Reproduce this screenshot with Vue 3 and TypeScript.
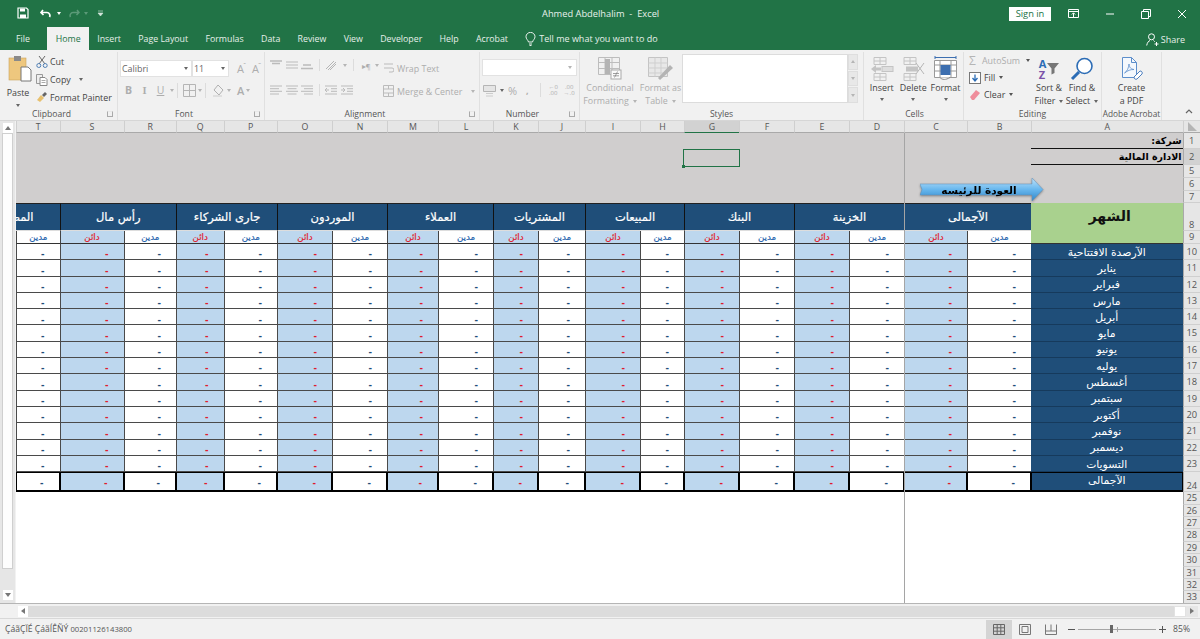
<script setup lang="ts">
const tabs = ['Insert', 'Page Layout', 'Formulas', 'Data', 'Review', 'View', 'Developer', 'Help', 'Acrobat']
const letters = ['A', 'B', 'C', 'D', 'E', 'F', 'G', 'H', 'I', 'J', 'K', 'L', 'M', 'N', 'O', 'P', 'Q', 'R', 'S', 'T']
const heads = ['الآجمالى', 'الخزينة', 'البنك', 'المبيعات', 'المشتريات', 'العملاء', 'الموردون', 'جارى الشركاء', 'رأس مال']
const months: [number, string][] = [
  [10, 'الآرصدة الافتتاحية'], [11, 'يناير'], [12, 'فبراير'], [13, 'مارس'], [14, 'أبريل'], [15, 'مايو'], [16, 'يونيو'],
  [17, 'يوليه'], [18, 'أغسطس'], [19, 'سبتمبر'], [20, 'أكتوبر'], [21, 'نوفمبر'], [22, 'ديسمبر'], [23, 'التسويات'],
]
const dataCols = Array.from({ length: 19 }, (_, i) => i)
const blankRows = [25, 26, 27, 28, 29, 30, 31, 32, 33]
</script>

<template>
  <div class="app">
    <header class="title">
      <div class="qat">
        <svg width="12" height="12" viewBox="0 0 12 12" class="save"><path d="M1 1h8.500L11 2.500V11H1z" fill="none" stroke="#fff" stroke-width="1.200"/><path d="M3 1.500h5v3H3zM3 7.500h6V11H3z" fill="#fff"/></svg>
        <svg width="12" height="10" viewBox="0 0 12 10" class="undo"><path d="M3 1 1 3.500 3.500 6M1.500 3.500H7a3 3 0 0 1 2.500 4.500" fill="none" stroke="#fff" stroke-width="1.700"/></svg>
        <i class="caret white c1"></i>
        <svg width="12" height="10" viewBox="0 0 12 10" class="redo"><path d="M9 1l2 2.500L8.500 6M10.500 3.500H5A3 3 0 0 0 2.500 8" fill="none" stroke="#5b9a78" stroke-width="1.500"/></svg>
        <i class="caret dim c2"></i>
        <svg width="7" height="7" viewBox="0 0 7 7" class="cust"><path d="M1 1h5M1 3h5L3.500 6z" fill="#d5e6dc" stroke="#d5e6dc" stroke-width=".6"/></svg>
      </div>
      <div class="doc">Ahmed Abdelhalim&nbsp; -&nbsp; Excel</div>
      <div class="win">
        <span class="signin">Sign in</span>
        <svg class="w1" width="11" height="10" viewBox="0 0 11 10"><path d="M.5.500h10v8H.5zM.5 2.500h10M5.500 8V4M3.800 5.500 5.500 3.800 7.200 5.500" fill="none" stroke="#fff"/></svg>
        <svg class="w2" width="10" height="10" viewBox="0 0 10 10"><path d="M1 5h8" stroke="#fff"/></svg>
        <svg class="w3" width="10" height="10" viewBox="0 0 10 10"><path d="M.5 2.500h7v7h-7zM2.500 2.500v-2h7v7h-2" fill="none" stroke="#fff"/></svg>
        <svg class="w4" width="10" height="10" viewBox="0 0 10 10"><path d="M1 1l8 8M9 1l-8 8" stroke="#fff"/></svg>
      </div>
    </header>

    <nav class="tabs">
      <span class="tab file">File</span>
      <span class="tab home">Home</span>
      <span v-for="t in tabs" :key="t" class="tab">{{ t }}</span>
      <span class="tell">
        <svg width="11" height="14" viewBox="0 0 11 14"><path d="M3.500 10C3 8 1 7 1 4.700a4.500 4.300 0 0 1 9 0C10 7 8 8 7.500 10zM4 12h3M4.500 13.500h2" fill="none" stroke="#fff" stroke-width=".9"/></svg>
        Tell me what you want to do
      </span>
      <span class="share">
        <svg width="13" height="13" viewBox="0 0 13 13"><circle cx="5.500" cy="3.800" r="3" fill="none" stroke="#fff"/><path d="M.7 12.500c.5-3 2-4.500 3.300-5M7.500 7.500c.5.300 1 .8 1.200 1.200M8.500 11h4M10.500 9v4" fill="none" stroke="#fff"/></svg>
        Share
      </span>
    </nav>

    <section class="ribbon">
      <div class="group g-clip">
        <div class="body row">
          <div class="paste">
            <svg width="24" height="29" viewBox="0 0 24 29"><rect x="1" y="3" width="17" height="22" fill="#eec77e" stroke="#c9a35c" stroke-width=".6"/><rect x="6" y="1" width="7" height="5" fill="#8a8a8a"/><path d="M13 12h7l3 3v11H13z" fill="#fff" stroke="#777"/></svg>
            <span class="lbl p-txt">Paste</span>
            <i class="caret"></i>
          </div>
          <div class="stack">
            <div class="srow">
              <svg width="12" height="13" viewBox="0 0 12 13"><path d="M3 1l6 8M9 1 3 9" stroke="#666" fill="none"/><circle cx="2.800" cy="10.500" r="2" fill="none" stroke="#4f7fb5"/><circle cx="9.200" cy="10.500" r="2" fill="none" stroke="#4f7fb5"/></svg>
              Cut
            </div>
            <div class="srow">
              <svg width="12" height="13" viewBox="0 0 12 13"><path d="M.5 1.500h6v9h-6z" fill="#eee" stroke="#999"/><path d="M4 4.500h5l2 2v6H4z" fill="#fff" stroke="#888"/><path d="M5.500 7.500h4M5.500 9.500h4" stroke="#aaa"/></svg>
              Copy <i class="caret ml6"></i>
            </div>
            <div class="srow">
              <svg width="12" height="12" viewBox="0 0 12 12"><path d="M1 9l4-5 3 3-4 4z" fill="#e7c06e"/><path d="M6 4l3-3 2 2-3 3z" fill="#666"/></svg>
              Format Painter
            </div>
          </div>
        </div>
        <div class="gl pr">Clipboard<i class="launch"></i></div>
      </div>

      <div class="group g-font">
        <div class="body col">
          <div class="combos">
            <span class="combo c-name">Calibri<i class="caret"></i></span>
            <span class="combo c-size">11<i class="caret"></i></span>
            <span class="ga g1">A<sup>ˆ</sup></span>
            <span class="ga g2">A<sup>ˇ</sup></span>
          </div>
          <div class="fonts2">
            <b class="dis bi">B</b><i class="dis bi serif">I</i><u class="dis bi">U</u><i class="caret dis2 f-c1"></i>
            <span class="sep f-s"></span>
            <svg class="f-i" width="13" height="13" viewBox="0 0 13 13"><path d="M.5.500h12v12H.5zM6.500.500v12M.5 6.500h12" fill="none" stroke="#b5b5b5"/></svg><i class="caret dis2 f-c2"></i>
            <span class="sep f-s"></span>
            <svg class="f-i2" width="13" height="13" viewBox="0 0 13 13"><path d="M6 1l5 5-4 5-5-5z" fill="none" stroke="#b0b0b0"/><path d="M1 12h9" stroke="#d8d8d8" stroke-width="1.500"/></svg><i class="caret dis2 f-c2"></i>
            <span class="dis ca">A</span><i class="caret dis2 f-c2"></i>
          </div>
        </div>
        <div class="gl pr">Font<i class="launch"></i></div>
      </div>

      <div class="group g-align">
        <div class="body al">
          <div class="al-rows">
            <div class="alr">
              <svg width="12" height="10" viewBox="0 0 12 10"><path d="M0 1h12M2 3.500h8" stroke="#bbb" stroke-width="1.300"/></svg>
              <svg width="12" height="10" viewBox="0 0 12 10"><path d="M0 2h12M0 5h12M0 8h12" stroke="#bbb"/></svg>
              <svg width="12" height="10" viewBox="0 0 12 10"><path d="M2 5h8M0 8.500h12" stroke="#bbb" stroke-width="1.300"/></svg>
              <span class="sep s2"></span>
              <svg class="orient" width="13" height="12" viewBox="0 0 13 12"><path d="M1 10 9 2M3 11l8-8M5 11l6-6" stroke="#b5b5b5"/></svg>
              <i class="caret dis2 a-c"></i>
              <span class="sep s2 a-s"></span>
              <span class="dis para">▸¶</span>
              <i class="caret dis2 a-c"></i>
            </div>
            <div class="alr">
              <svg width="12" height="10" viewBox="0 0 12 10"><path d="M0 1h12M0 3.700h9M0 6.300h12M0 9h9" stroke="#bbb"/></svg>
              <svg width="12" height="10" viewBox="0 0 12 10"><path d="M0 1h12M1.500 3.700h9M0 6.300h12M1.500 9h9" stroke="#bbb"/></svg>
              <svg width="12" height="10" viewBox="0 0 12 10"><path d="M0 1h12M3 3.700h9M0 6.300h12M3 9h9" stroke="#bbb"/></svg>
              <span class="sep s2"></span>
              <svg class="orient" width="12" height="10" viewBox="0 0 12 10"><path d="M0 1h12M6 3.700h6M6 6.300h6M0 9h12M4 5H0l2-2M0 5l2 2" fill="none" stroke="#bbb"/></svg>
              <svg class="ind2" width="12" height="10" viewBox="0 0 12 10"><path d="M0 1h12M6 3.700h6M6 6.300h6M0 9h12M0 5h4l-2-2M4 5 2 7" fill="none" stroke="#bbb"/></svg>
            </div>
          </div>
          <span class="sep s3"></span>
          <div class="al-right">
            <div class="dis2-row"><svg width="11" height="12" viewBox="0 0 11 12"><path d="M1 2h9M1 6h8a2 2 0 0 1 0 4H6" fill="none" stroke="#bbb"/></svg><span class="dis-t">Wrap Text</span></div>
            <div class="dis2-row"><svg width="11" height="12" viewBox="0 0 11 12"><path d="M.5.500h10v11H.5zM.5 4h10M.5 8h10M5.500.500V4M5.500 8v3.500" fill="none" stroke="#bbb"/></svg><span class="dis-t">Merge &amp; Center</span><i class="caret dis2 m4"></i></div>
          </div>
        </div>
        <div class="gl pr">Alignment<i class="launch"></i></div>
      </div>

      <div class="group g-num">
        <div class="body col">
          <div class="n-combo"><i class="caret dis2"></i></div>
          <div class="n-row">
            <svg width="13" height="13" viewBox="0 0 13 13"><path d="M.5 1.500h12v6H.5z" fill="#e5e5e5" stroke="#b5b5b5"/><path d="M3 9.500h7M3 12h7" stroke="#ccc"/></svg>
            <i class="caret"></i>
            <span class="dis pct">%</span>
            <span class="dis comma">,</span>
            <span class="sep s4"></span>
            <span class="dis dec">←0<br>.00</span>
            <span class="dis dec d2">.00<br>→.0</span>
          </div>
        </div>
        <div class="gl pr">Number<i class="launch"></i></div>
      </div>

      <div class="group g-sty">
        <div class="body row">
          <div class="big w60">
            <div class="ico">
              <svg width="24" height="23" viewBox="0 0 24 23"><path d="M.5.500h21v17H.5zM.5 5.500h21M.5 11.500h21M7 .500v17M14 .500v17" fill="none" stroke="#bdbdbd"/><rect x="7" y="2" width="5" height="15" fill="#b4b4b4"/><rect x="13" y="13" width="10" height="9" fill="#fafafa" stroke="#aaa"/><path d="M15 16.500h6M15 18.800h6M19.500 14.500l-3 6" stroke="#888" fill="none" stroke-width=".8"/></svg>
            </div>
            <span class="dis-t">Conditional</span>
            <span class="dis-t">Formatting<i class="caret dis2 m3"></i></span>
          </div>
          <div class="big w42">
            <div class="ico">
              <svg width="26" height="24" viewBox="0 0 26 24"><path d="M.5.500h19v19H.5z" fill="#e8e8e8" stroke="#c4c4c4"/><path d="M.5 6h19M.5 11h19M.5 16h19M7 .500v19M13 .500v19" stroke="#cfcfcf"/><path d="M10 21 22 8l3 3-13 12z" fill="#b4b4b4"/></svg>
            </div>
            <span class="dis-t">Format as</span>
            <span class="dis-t">Table<i class="caret dis2 m3"></i></span>
          </div>
          <div class="gallery"></div>
          <div class="gscroll">
            <span><i class="caret up dis2"></i></span>
            <span><i class="caret dis2"></i></span>
            <span><i class="caret dis2"></i></span>
          </div>
        </div>
        <div class="gl">Styles</div>
      </div>

      <div class="group g-cells">
        <div class="body row">
          <div class="big w31">
            <div class="ico">
              <svg width="24" height="24" viewBox="0 0 24 24"><path d="M4 .500h12v7H4zM4 4h12M4 16.500h12v7H4zM4 20h12M10 .500v7M10 16.500v7" fill="none" stroke="#c4c4c4"/><path d="M1 12l5-4v2.500h5v3H6V16z" fill="#c4c4c4"/><rect x="12" y="9.500" width="11" height="5" fill="#dedede" stroke="#c4c4c4"/></svg>
            </div>
            <span class="t">Insert</span><i class="caret"></i>
          </div>
          <div class="big w31">
            <div class="ico">
              <svg width="24" height="24" viewBox="0 0 24 24"><path d="M3 .500h12v7H3zM3 4h12M3 16.500h12v7H3zM3 20h12M9 .500v7M9 16.500v7" fill="none" stroke="#c4c4c4"/><rect x="5" y="9.500" width="12" height="5" fill="#c4c4c4"/><path d="M15 6l8 11M23 6l-8 11" stroke="#b5b5b5"/></svg>
            </div>
            <span class="t">Delete</span><i class="caret"></i>
          </div>
          <div class="big w33">
            <div class="ico">
              <svg width="24" height="25" viewBox="0 0 24 25"><path d="M1 1.500h21M1 0v3M22 0v3" stroke="#3d6fb0" fill="none"/><path d="M.5 4.500h22v17H.5zM.5 9h22M.5 15h22M6 4.500v17M17 4.500v17" fill="#fff" stroke="#999"/><rect x="6.500" y="9" width="10" height="10" fill="#3d6fb0"/><path d="M6 21.500c2 2.500 6 2.500 10 0" fill="#fff" stroke="#888"/></svg>
            </div>
            <span class="t">Format</span><i class="caret"></i>
          </div>
        </div>
        <div class="gl">Cells</div>
      </div>

      <div class="group g-edit">
        <div class="body row">
          <div class="estack">
            <div class="erow dis-t"><span class="sum">Σ</span>AutoSum<i class="caret dark ml6"></i></div>
            <div class="erow"><svg width="12" height="12" viewBox="0 0 12 12"><rect x=".5" y=".5" width="11" height="11" fill="#fff" stroke="#777"/><path d="M6 2.500v6M3.500 6 6 9l2.500-3" fill="none" stroke="#2b6cb5" stroke-width="1.300"/></svg><span class="et">Fill</span><i class="caret dark m3"></i></div>
            <div class="erow"><svg width="12" height="12" viewBox="0 0 12 12"><path d="M1 8l6-7 4 3-6 7H3z" fill="#ef8d9b"/></svg><span class="et">Clear</span><i class="caret dark m3"></i></div>
          </div>
          <div class="big w33b">
            <div class="ico">
              <span class="azbox"><b class="a">A</b><b class="z">Z</b></span>
              <svg width="12" height="13" viewBox="0 0 12 13"><path d="M0 1h12L7.500 6.500V11L4.500 12.500V6.500z" fill="#777"/></svg>
            </div>
            <span class="t">Sort &amp;</span>
            <span class="t">Filter<i class="caret m3"></i></span>
          </div>
          <div class="big w34">
            <div class="ico">
              <svg width="24" height="24" viewBox="0 0 24 24"><circle cx="14.500" cy="9" r="7.500" fill="#fff" stroke="#2b6cb5" stroke-width="1.600"/><path d="M9 15 2 22" stroke="#2b6cb5" stroke-width="3"/></svg>
            </div>
            <span class="t">Find &amp;</span>
            <span class="t">Select<i class="caret m3"></i></span>
          </div>
        </div>
        <div class="gl">Editing</div>
      </div>

      <div class="group g-pdf">
        <div class="body row center">
          <div class="big wfull">
            <div class="ico">
              <svg width="22" height="24" viewBox="0 0 22 24"><path d="M1.500.500h9l5 5v15h-14z" fill="#f4f8fd" stroke="#5d8ecb"/><path d="M10.500.500v5h5" fill="none" stroke="#5d8ecb"/><path d="M3.500 16c3-2 4-5 4.500-9 .5 4 2 5 5 5.500-4 0-6 1-9.500 3.500z" fill="none" stroke="#5d8ecb" stroke-width=".8"/><path d="M14 19l5-5a2 2 0 0 1 2 3l-5 5a2 2 0 0 1-3-2z" fill="#fff" stroke="#4d7fbf"/></svg>
            </div>
            <span class="t">Create</span>
            <span class="t">a PDF</span>
          </div>
        </div>
        <div class="gl tight">Adobe Acrobat</div>
      </div>
      <div class="collapse"><svg width="8" height="6" viewBox="0 0 8 6"><path d="M1 5l3-3 3 3" fill="none" stroke="#666" stroke-width="1.200"/></svg></div>
    </section>

    <section class="main">
      <aside class="vscroll">
        <span class="vbtn"><i class="tri up"></i></span>
        <span class="vthumb"></span>
        <span class="vbtn low"><i class="tri"></i></span>
      </aside>
      <div class="sheet">
        <div class="grid">
          <div class="hd corner"><svg width="9" height="9" viewBox="0 0 9 9"><path d="M0 0v9h9z" fill="#b5b5b5"/></svg></div>
          <div v-for="l in letters" :key="l" class="hd" :class="{ active: l === 'G' }">{{ l }}</div>

          <div class="greyblock"></div>

          <div class="rn">1</div><div class="a-top lined">شركة:</div>
          <div class="rn act">2</div><div class="a-top lined">الادارة المالية</div>
          <div class="rn">5</div><div class="a-grey"></div>
          <div class="rn">6</div><div class="a-grey"></div>
          <div class="rn">7</div><div class="a-grey"></div>

          <div class="rn bottom">8</div>
          <div class="month-h">الشهر</div>
          <div v-for="h in heads" :key="h" class="merged">{{ h }}</div>
          <div class="merged last"><span>المصروفات</span></div>

          <div class="rn">9</div>
          <div class="month-sub"></div>
          <div v-for="c in dataCols" :key="'s' + c" class="sub" :class="c % 2 ? 'cr' : 'db'">{{ c % 2 ? 'دائن' : 'مدين' }}</div>

          <template v-for="m in months" :key="m[0]">
            <div class="rn">{{ m[0] }}</div>
            <div class="mon">{{ m[1] }}</div>
            <div v-for="c in dataCols" :key="c" class="cell" :class="c % 2 ? 'cr' : 'db'">-</div>
          </template>

          <div class="rn bottom">24</div>
          <div class="mon total">الآجمالى</div>
          <div v-for="c in dataCols" :key="'t' + c" class="cell tot" :class="c % 2 ? 'cr' : 'db'">-</div>

          <template v-for="r in blankRows" :key="r">
            <div class="rn">{{ r }}</div>
            <div class="blank"></div>
          </template>
        </div>
        <div class="freeze"></div>
        <div class="selected"><i></i></div>
        <div class="shape">
          <svg width="124" height="25" viewBox="0 0 124 25">
            <defs>
              <linearGradient id="ag" x1="0" y1="0" x2="0" y2="1">
                <stop offset="0" stop-color="#bfe3fa"/><stop offset=".5" stop-color="#68b7ee"/><stop offset="1" stop-color="#2f86c8"/>
              </linearGradient>
            </defs>
            <path d="M0 7h112V1l11 11.500L112 24v-6H0l2-5.500z" fill="url(#ag)" stroke="#5c8fb8" stroke-width=".5"/>
          </svg>
          <span>العودة للرئيسه</span>
        </div>
      </div>
    </section>

    <section class="hscroll">
      <span class="hbtn"><i class="tri left"></i></span>
      <span class="htrack"></span>
      <span class="hend"></span>
      <span class="hbtn2"><i class="tri right"></i></span>
    </section>

    <footer class="status">
      <span class="stxt">ÇáãÇÏÉ ÇáãÍÊÑÝ <span class="digits">00201126143800</span></span>
      <span class="view on"><svg width="12" height="11" viewBox="0 0 12 11"><path d="M.5.500h11v10H.5zM.5 3.800h11M.5 7.200h11M4.200.500v10M7.800.500v10" fill="none" stroke="#666"/></svg></span>
      <span class="view"><svg width="12" height="11" viewBox="0 0 12 11"><path d="M.5.500h11v10H.5z" fill="none" stroke="#777"/><path d="M3 2.500h6v6H3z" fill="none" stroke="#777"/></svg></span>
      <span class="view"><svg width="12" height="11" viewBox="0 0 12 11"><path d="M.5.500v10h11V.500M.5 7h11M6 .500V7" fill="none" stroke="#777"/></svg></span>
      <span class="zbar">
        <svg width="7" height="7" viewBox="0 0 7 7"><path d="M0 3.500h7" stroke="#555"/></svg>
        <span class="slider"><i class="knob"></i><i class="tick"></i></span>
        <svg width="7" height="7" viewBox="0 0 7 7"><path d="M0 3.500h7M3.500 0v7" stroke="#555"/></svg>
      </span>
      <span class="pct85">85%</span>
    </footer>
  </div>
</template>

<style scoped>
.app { width: 1200px; height: 639px; overflow: hidden; display: flex; flex-direction: column; font-family: "Open Sans", "Noto Sans", sans-serif; color: #444; background: #f1f1f1; }
i { font-style: normal; }
.title { height: 27px; background: #217346; display: flex; align-items: center; flex: none; }
.qat { display: flex; align-items: center; width: 120px; padding-left: 17px; box-sizing: border-box; }
.save { margin-top: -1px; }
.undo { margin-left: 11px; }
.c1 { margin-left: 5px; }
.redo { margin-left: 7px; }
.c2 { margin-left: 4px; }
.cust { margin-left: 9px; }
.doc { margin-left: 422px; color: #e8f1ec; font-size: 9.300px; white-space: nowrap; }
.win { margin-left: auto; display: flex; align-items: center; padding-right: 13px; }
.signin { width: 42px; height: 14px; line-height: 14px; background: #fff; color: #217346; text-align: center; font-size: 9.300px; margin-right: -1px; }
.w1 { margin-left: 18px; }
.w2 { margin-left: 26px; }
.w3 { margin-left: 26px; }
.w4 { margin-left: 26px; }

.tabs { height: 23px; background: #217346; display: flex; align-items: center; color: #e6f0ea; font-size: 8.800px; flex: none; padding-left: 16px; }
.tab { margin-right: 17.300px; white-space: nowrap; }
.home { background: #f1f1f1; color: #217346; align-self: stretch; display: flex; align-items: center; margin-right: 8px; width: 42px; box-sizing: border-box; justify-content: center; }
.tell { display: flex; align-items: center; gap: 3px; white-space: nowrap; margin-right: auto; font-size: 9px; }
.share { display: flex; align-items: center; gap: 2px; margin-right: 15px; margin-top: 1px; font-size: 9px; }

.ribbon { height: 71px; background: #f1f1f1; display: flex; flex: none; border-bottom: 1px solid #d6d6d6; box-sizing: border-box; font-size: 8.900px; }
.group { display: flex; flex-direction: column; border-right: 1px solid #e0e0e0; flex: none; box-sizing: border-box; margin-top: 2px; }
.body { height: 55px; flex: none; }
.row { display: flex; }
.col { display: flex; flex-direction: column; }
.center { justify-content: center; }
.gl { height: 13px; line-height: 14px; font-size: 8.600px; text-align: center; position: relative; color: #555; box-sizing: border-box; }
.gl.pr { padding-right: 14px; }
.gl.tight { font-size: 8.300px; white-space: nowrap; }
.launch { position: absolute; right: 4px; top: 4px; width: 6px; height: 6px; border: 1px solid #aaa; border-top-color: #e8e8e8; box-sizing: border-box; }
.caret { display: inline-block; width: 0; height: 0; border-left: 2.500px solid transparent; border-right: 2.500px solid transparent; border-top: 3px solid #666; flex: none; vertical-align: middle; }
.caret.white { border-top-color: #fff; }
.caret.dim { border-top-color: #5b9a78; }
.caret.dis2 { border-top-color: #b5b5b5; }
.caret.dark { border-top-color: #555; }
.caret.up { border-top: 0; border-bottom: 3px solid #b5b5b5; }
.ml6 { margin-left: 6px; }
.m4 { margin-left: 6px; }
.m3 { margin-left: 4px; }
.dis { color: #adadad; }
.dis-t { color: #adadad; white-space: nowrap; }
.sep { width: 1px; height: 15px; background: #dcdcdc; flex: none; }

.g-clip { width: 118px; }
.paste { width: 36px; display: flex; flex-direction: column; align-items: center; padding-top: 3px; box-sizing: border-box; }
.p-txt { line-height: 14px; }
.paste svg { margin-left: 3px; margin-bottom: 2px; }
.paste .caret { margin-top: 4px; }
.stack { display: flex; flex-direction: column; }
.srow { height: 18px; display: flex; align-items: center; gap: 2px; white-space: nowrap; }

.g-font { width: 147px; }
.combos { display: flex; align-items: center; height: 18px; margin-top: 7px; padding-left: 2px; }
.combo { height: 17px; background: #fff; border: 1px solid #e2e2e2; box-sizing: border-box; display: flex; align-items: center; justify-content: space-between; padding: 0 3px 0 1px; color: #666; }
.c-name { width: 72px; }
.c-size { width: 37px; }
.ga { color: #adadad; font-size: 11px; margin-left: 8px; width: 8px; line-height: 1; position: relative; }
.ga sup { position: absolute; left: 6px; top: -2px; font-size: 8px; }
.g2 { margin-left: 7px; }
.fonts2 { display: flex; align-items: center; height: 16px; margin-top: 5px; padding-left: 5px; }
.bi { font-size: 10.500px; width: 11px; margin-right: 5px; text-align: center; }
.serif { font-family: "Liberation Serif", serif; font-weight: bold; }
.f-c1 { margin-left: -1px; }
.f-s { margin-left: 3px; }
.f-i { margin-left: 5px; }
.f-i2 { margin-left: 6px; }
.f-c2 { margin-left: 2px; }
.ca { font-size: 11px; font-weight: 600; margin-left: 6px; }

.g-align { width: 215px; }
.al { display: flex; }
.al-rows { width: 117px; padding: 5px 0 0 5px; flex: none; display: flex; flex-direction: column; gap: 9px; box-sizing: content-box; }
.alr { display: flex; align-items: center; height: 16px; gap: 3.500px; }
.s2 { height: 12px; margin-left: 2px; margin-right: 2px; }
.orient { flex: none; }
.a-c { margin-left: 1px; }
.a-s { margin-left: 3px; }
.para { font-size: 8px; margin-left: 2px; }
.s3 { width: 0; background: none; }
.al-right { display: flex; flex-direction: column; padding-top: 9px; gap: 9px; margin-left: -4px; }
.dis2-row { display: flex; align-items: center; gap: 3px; height: 14px; }

.g-num { width: 100px; }
.n-combo { width: 95px; height: 17px; margin: 7px 0 0 2px; background: #fff; border: 1px solid #e2e2e2; box-sizing: border-box; display: flex; align-items: center; justify-content: flex-end; padding-right: 4px; flex: none; }
.n-row { display: flex; align-items: center; height: 16px; margin-top: 6px; padding-left: 3px; }
.n-row .caret { margin-left: 4px; }
.pct { font-size: 11px; margin-left: 4px; }
.comma { font-size: 9px; font-weight: bold; margin-left: 9px; width: 8px; }
.s4 { margin-left: 6px; height: 14px; }
.dec { font-size: 6px; line-height: 6.500px; margin-left: 6px; text-align: center; width: 12px; }
.d2 { margin-left: 4px; }

.g-sty { width: 284px; }
.big { display: flex; flex-direction: column; align-items: center; flex: none; box-sizing: border-box; line-height: 13px; white-space: nowrap; }
.big > .caret { margin-top: 4px; }
.ico { height: 29px; flex: none; display: flex; align-items: center; justify-content: center; width: 100%; padding-top: 4px; box-sizing: border-box; }
.w60 { width: 60px; }
.w42 { width: 41px; }
.w31 { width: 31.500px; }
.w33 { width: 33px; }
.w33b { width: 32px; }
.w34 { width: 34px; }
.wfull { width: 60px; }
.gallery { width: 166px; height: 49px; background: #fff; border: 1px solid #dcdcdc; box-sizing: border-box; margin: 2px 0 0 1px; }
.gscroll { display: flex; flex-direction: column; width: 10px; height: 49px; margin-top: 2px; gap: 1px; }
.gscroll span { flex: 1; background: #e8e8e8; border: 1px solid #dedede; box-sizing: border-box; display: flex; align-items: center; justify-content: center; }

.g-cells { width: 100px; padding-left: 2px; }
.g-edit { width: 138px; }
.estack { width: 69px; padding-left: 5px; box-sizing: border-box; flex: none; }
.erow { height: 17px; display: flex; align-items: center; white-space: nowrap; }
.et { margin-left: 3px; }
.sum { font-size: 12px; width: 13px; color: #b5b5b5; flex: none; }
.azbox { display: flex; flex-direction: column; font-size: 11px; line-height: 11px; margin-right: 1px; }
.azbox .a { color: #2b6cb5; }
.azbox .z { color: #7b52a8; }
.g-pdf { width: 60px; }
.collapse { flex: 1; display: flex; justify-content: flex-end; align-items: flex-end; padding: 0 7px 6px 0; }

.main { height: 482px; flex: none; display: flex; overflow: hidden; }
.vscroll { width: 16px; flex: none; display: flex; flex-direction: column; align-items: center; background: #e6e6e6; box-sizing: border-box; border-right: 1px solid #f2f2f2; }
.vbtn { width: 10px; height: 10px; background: #fff; display: flex; align-items: center; justify-content: center; margin-top: 2px; flex: none; }
.vthumb { width: 11px; height: 436px; background: #fdfdfd; border: 1px solid #cfcfcf; box-sizing: border-box; flex: none; }
.low { margin-top: 21px; }
.tri { display: block; width: 0; height: 0; border-left: 3.500px solid transparent; border-right: 3.500px solid transparent; border-top: 4px solid #777; }
.tri.up { border-top: 0; border-bottom: 4px solid #777; }
.tri.left { border: 0; border-top: 3.500px solid transparent; border-bottom: 3.500px solid transparent; border-right: 4px solid #777; }
.tri.right { border: 0; border-top: 3.500px solid transparent; border-bottom: 3.500px solid transparent; border-left: 4px solid #777; }

.sheet { position: relative; width: 1184px; flex: none; overflow: hidden; background: #fff; }
.grid {
  direction: rtl;
  display: grid;
  grid-template-columns: 17.500px 151.500px 64px 63px 55px 55px 55px 55px 44px 55px 47px 45px 55px 51px 55px 55px 53.500px 47.500px 52.500px 64px 43.500px;
  grid-template-rows: 12px 16px 16px 13px 13px 12px 28px 13px repeat(14, 16.300px) 20px repeat(9, 12.400px);
  font-family: "DejaVu Sans", sans-serif;
}
.hd { background: #e6e6e6; font: 8.800px "Open Sans", sans-serif; color: #555; text-align: center; line-height: 12px; border-left: 1px solid #cfcfcf; border-bottom: 1px solid #a9a9a9; box-sizing: border-box; }
.corner { display: flex; align-items: flex-end; padding: 0 3px 1px 0; direction: ltr; justify-content: flex-end; }
.hd.active { background: #d2d2d2; border-bottom: 1px solid #217346; }
.rn { background: #e6e6e6; font: 9.300px/1 "Open Sans", sans-serif; color: #555; display: flex; align-items: center; justify-content: center; border-bottom: 1px solid #cfcfcf; border-left: 1px solid #a9a9a9; box-sizing: border-box; overflow: hidden; }
.rn.act { background: #d2d2d2; }
.rn.bottom { align-items: flex-end; padding-bottom: 1px; }
.greyblock { grid-column: 3 / -1; grid-row: 2 / 7; background: #d0cece; }
.a-top { background: #d0cece; color: #000; font-size: 9.500px; font-weight: bold; padding-right: 1px; display: flex; align-items: center; overflow: hidden; white-space: nowrap; box-sizing: border-box; }
.lined { border-bottom: 1px solid #111; }
.a-grey { background: #d0cece; }
.month-h { background: #a9d18e; color: #111; font-size: 14px; font-weight: bold; display: flex; align-items: center; justify-content: center; padding: 0 0 2px 6px; box-sizing: border-box; }
.month-sub { background: #a9d18e; border-bottom: 1px solid #333; box-sizing: border-box; }
.merged { grid-column: span 2; background: #1f4e79; color: #fff; font-size: 11.500px; display: flex; align-items: center; justify-content: center; border-left: 1px solid #111; border-top: 1px solid #222; border-bottom: 1px solid #ddd; box-sizing: border-box; white-space: nowrap; overflow: hidden; -webkit-text-stroke: .2px #fff; }
.merged.last { grid-column: span 1; justify-content: flex-start; padding-right: 26px; border-left: 0; }
.sub { font-size: 8.700px; display: flex; align-items: center; justify-content: center; border-left: 1px solid #444; border-bottom: 1px solid #333; box-sizing: border-box; background: #fff; -webkit-text-stroke: .2px currentColor; }
.sub.db { color: #1f63ad; background: #fff; }
.sub.cr { color: #e01b2c; background: #bdd7ee; }
.mon { background: #1f4e79; color: #fff; font-size: 10.800px; display: flex; align-items: center; justify-content: center; padding-top: 1px; border-bottom: 1px solid #163a5c; box-sizing: border-box; white-space: nowrap; }
.cell { font: bold 10.500px/1 "Liberation Sans", sans-serif; display: flex; align-items: center; justify-content: flex-start; padding: 4px 15px 0 0; border-left: 1px solid #4a4a4a; border-bottom: 1px solid #4a4a4a; box-sizing: border-box; }
.cell.db { color: #1f4e79; background: #fff; }
.cell.cr { color: #e01b2c; background: #bdd7ee; }
.tot { border: 1px solid #000; border-top-width: 1.500px; border-bottom-width: 2px; padding-top: 2px; }
.total { border: 1px solid #000; border-bottom-width: 2px; border-top-width: 1.500px; padding: 0 0 2px; }
.blank { grid-column: 2 / -1; background: #fff; }

.freeze { position: absolute; left: 888px; top: 12px; bottom: 0; width: 1px; background: #a5a5a5; }
.selected { position: absolute; left: 667px; top: 28px; width: 57px; height: 18px; border: 1px solid #217346; box-sizing: border-box; }
.selected i { position: absolute; left: -2px; bottom: -2px; width: 3px; height: 3px; background: #217346; }
.shape { position: absolute; left: 904px; top: 56px; width: 124px; height: 25px; filter: drop-shadow(0 1px 1px rgba(0, 0, 0, .35)); }
.shape svg { display: block; }
.shape span { position: absolute; left: 0; top: 0; width: 118px; height: 25px; display: flex; align-items: center; justify-content: center; font: bold 10.500px "DejaVu Sans", sans-serif; color: #000; direction: rtl; white-space: nowrap; }

.hscroll { height: 15px; flex: none; display: flex; align-items: center; padding: 0 2px 0 18px; box-sizing: border-box; border-top: 1px solid #b5b5b5; background: #f1f1f1; }
.hbtn { width: 10px; height: 11px; background: #fff; display: flex; align-items: center; justify-content: center; flex: none; }
.htrack { flex: 1; height: 11px; background: #dcdcdc; }
.hend { width: 12px; height: 11px; background: #fff; border: 1px solid #e2e2e2; box-sizing: border-box; flex: none; }
.hbtn2 { width: 12px; height: 11px; background: #e6e6e6; display: flex; align-items: center; justify-content: center; flex: none; }

.status { height: 21px; flex: none; display: flex; align-items: center; background: #f1f1f1; border-top: 1px solid #d8d8d8; box-sizing: border-box; font-size: 8.600px; color: #555; }
.stxt { margin-left: 5px; margin-right: auto; }
.digits { font-size: 7.700px; }
.view { width: 26px; height: 19px; display: flex; align-items: center; justify-content: center; }
.view.on { background: #d4d4d4; }
.zbar { display: flex; align-items: center; margin-left: 4px; gap: 3px; }
.slider { position: relative; width: 78px; height: 1px; background: #a5a5a5; display: block; }
.knob { position: absolute; left: 32px; top: -4px; width: 3px; height: 8px; background: #666; }
.tick { position: absolute; left: 39px; top: -2px; width: 1px; height: 5px; background: #a5a5a5; }
.pct85 { margin: 0 10px 0 7px; }
</style>
